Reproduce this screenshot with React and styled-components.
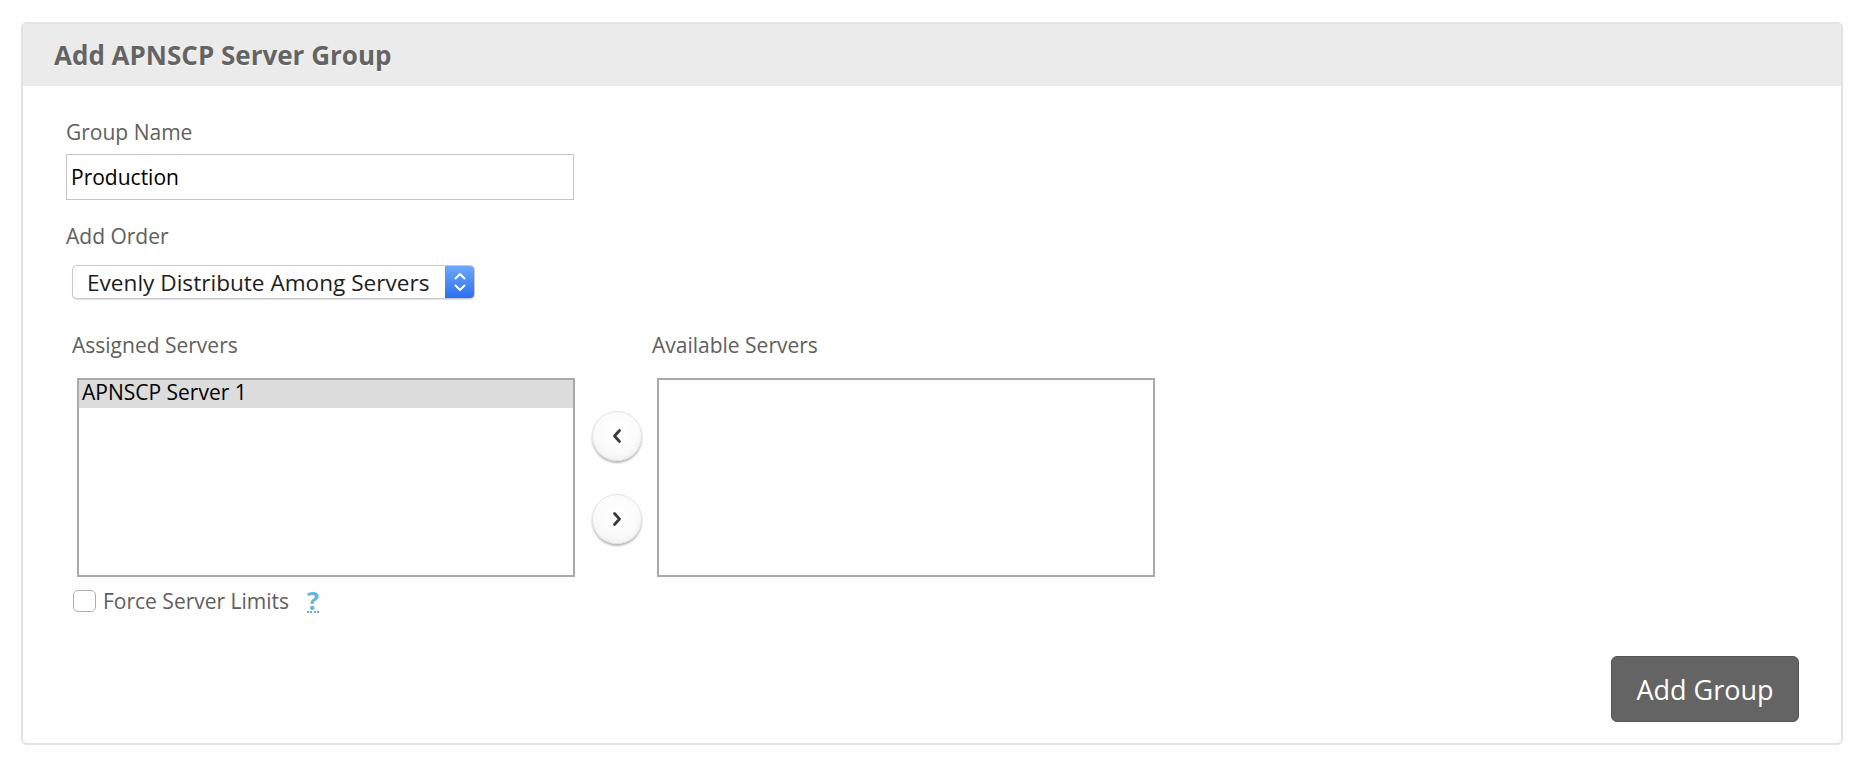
import React from 'react';
import styled, { createGlobalStyle } from 'styled-components';

const GlobalStyle = createGlobalStyle`
  html, body {
    margin: 0;
    padding: 0;
    background: #ffffff;
  }
  body {
    font-family: 'Open Sans', 'Noto Sans', sans-serif;
  }
`;

const ChevronLeft = () => (
  <svg width="12" height="16" viewBox="0 0 12 16">
    <polyline points="8.5,2.5 3.5,8 8.5,13.5" fill="none" stroke="#3a3a3a" strokeWidth="2.8" strokeLinecap="round" strokeLinejoin="round" />
  </svg>
);

const ChevronRight = () => (
  <svg width="12" height="16" viewBox="0 0 12 16">
    <polyline points="3.5,2.5 8.5,8 3.5,13.5" fill="none" stroke="#3a3a3a" strokeWidth="2.8" strokeLinecap="round" strokeLinejoin="round" />
  </svg>
);

const Stepper = () => (
  <svg width="14" height="22" viewBox="0 0 14 22">
    <polyline points="2.5,7.5 7,3 11.5,7.5" fill="none" stroke="#fff" strokeWidth="2" strokeLinecap="round" strokeLinejoin="round" />
    <polyline points="2.5,14.5 7,19 11.5,14.5" fill="none" stroke="#fff" strokeWidth="2" strokeLinecap="round" strokeLinejoin="round" />
  </svg>
);

const App = () => {
  const assigned = ['APNSCP Server 1'];
  const available = [];

  return (
    <>
      <GlobalStyle />
      <Panel>
        <PanelHeader>
          <PanelTitle>Add APNSCP Server Group</PanelTitle>
        </PanelHeader>

        <PanelBody>
          <FieldLabel>Group Name</FieldLabel>
          <TextInput type="text" defaultValue="Production" />

          <FieldLabel>Add Order</FieldLabel>
          <SelectBox>
            <SelectValue>Evenly Distribute Among Servers</SelectValue>
            <SelectCap>
              <Stepper />
            </SelectCap>
          </SelectBox>

          <ServerSection>
            <ServerGrid>
              <ColumnLabel>Assigned Servers</ColumnLabel>
              <span />
              <ColumnLabel>Available Servers</ColumnLabel>

              <ListBox>
                {assigned.map((name, i) => (
                  <ListOption key={name} selected={i === 0}>{name}</ListOption>
                ))}
              </ListBox>

              <MoveButtons>
                <RoundButton type="button" aria-label="Assign">
                  <ChevronLeft />
                </RoundButton>
                <RoundButton type="button" aria-label="Remove">
                  <ChevronRight />
                </RoundButton>
              </MoveButtons>

              <ListBox>
                {available.map((name) => (
                  <ListOption key={name}>{name}</ListOption>
                ))}
              </ListBox>
            </ServerGrid>

            <CheckRow>
              <CheckBox type="checkbox" />
              <CheckLabel>Force Server Limits</CheckLabel>
              <HelpMark title="Help">?</HelpMark>
            </CheckRow>
          </ServerSection>

          <FormFooter>
            <SubmitButton type="button">Add Group</SubmitButton>
          </FormFooter>
        </PanelBody>
      </Panel>
    </>
  );
};

const Panel = styled.div`
  margin: 22px 17px 0 21px;
  border: 2px solid #e3e3e3;
  border-radius: 6px;
  background: #fefefe;
  overflow: hidden;
`;

const PanelHeader = styled.div`
  height: 62px;
  display: flex;
  align-items: center;
  padding-left: 31px;
  background: #ebebeb;
`;

const PanelTitle = styled.h2`
  margin: 0;
  font-size: 26px;
  font-weight: 700;
  color: #646464;
  text-shadow: 0 1px 0 #ffffff;
  line-height: 1;
`;

const PanelBody = styled.div`
  padding: 32px 42px 21px 43px;
  display: flex;
  flex-direction: column;
  align-items: flex-start;
`;

const FieldLabel = styled.label`
  display: block;
  font-size: 21px;
  line-height: 28px;
  color: #606060;
  margin-bottom: 8px;
`;

const TextInput = styled.input`
  box-sizing: border-box;
  width: 508px;
  height: 46px;
  margin: 0 0 22px;
  padding: 0 4px;
  border: 1px solid #c6c6c6;
  background: #ffffff;
  font-family: 'Open Sans', sans-serif;
  font-size: 21px;
  color: #000000;
  outline: none;
`;

const SelectBox = styled.div`
  box-sizing: border-box;
  display: flex;
  align-items: stretch;
  width: 403px;
  height: 34px;
  margin: 7px 0 32px 6px;
  border: 1px solid #c9c9c9;
  border-radius: 5px;
  background: #ffffff;
  box-shadow: 0 1px 1px rgba(0, 0, 0, 0.12);
  overflow: hidden;
`;

const SelectValue = styled.div`
  flex: 1;
  display: flex;
  align-items: center;
  padding-left: 14px;
  font-size: 22.6px;
  color: #1e1e1e;
  white-space: nowrap;
`;

const SelectCap = styled.div`
  width: 29px;
  display: flex;
  align-items: center;
  justify-content: center;
  background: linear-gradient(#6ca8f9, #2d6ef1);
`;

const ServerSection = styled.div`
  margin-left: 11px;
`;

const ServerGrid = styled.div`
  display: grid;
  grid-template-columns: 498px 82px 498px;
  grid-template-rows: 28px 199px;
  row-gap: 19px;
`;

const ColumnLabel = styled.div`
  margin-left: -5px;
  font-size: 21px;
  line-height: 28px;
  color: #606060;
`;

const ListBox = styled.div`
  box-sizing: border-box;
  border: 2px solid #a9a9a9;
  background: #ffffff;
  overflow: hidden;
`;

const ListOption = styled.div`
  height: 28px;
  padding: 0 3px;
  font-size: 21px;
  line-height: 25px;
  color: #000000;
  background: ${(p) => (p.selected ? '#dcdcdc' : 'transparent')};
`;

const MoveButtons = styled.div`
  display: flex;
  flex-direction: column;
  align-items: center;
  justify-content: center;
  gap: 33px;
  padding-left: 2px;
`;

const RoundButton = styled.button`
  width: 50px;
  height: 50px;
  padding: 0;
  display: flex;
  align-items: center;
  justify-content: center;
  border: 1px solid #e2e2e2;
  border-radius: 50%;
  background: radial-gradient(circle at 50% 40%, #ffffff 0%, #fbfbfb 55%, #e9e9e9 100%);
  box-shadow: 0 2px 2px rgba(0, 0, 0, 0.28);
  cursor: pointer;
`;

const CheckRow = styled.div`
  display: flex;
  align-items: center;
  height: 28px;
  margin: 10px 0 0 -4px;
`;

const CheckBox = styled.input`
  appearance: none;
  box-sizing: border-box;
  width: 23px;
  height: 22px;
  margin: 0 7px 0 0;
  border: 1px solid #adadad;
  border-radius: 5px;
  background: #ffffff;
`;

const CheckLabel = styled.span`
  font-size: 21px;
  line-height: 28px;
  color: #606060;
`;

const HelpMark = styled.abbr`
  margin-left: 18px;
  font-size: 25px;
  font-weight: 700;
  line-height: 22px;
  color: #62b3df;
  text-decoration: none;
  border-bottom: 2px dotted #62b3df;
  cursor: help;
`;

const FormFooter = styled.div`
  align-self: stretch;
  display: flex;
  justify-content: flex-end;
  margin-top: 41px;
`;

const SubmitButton = styled.button`
  width: 188px;
  height: 66px;
  border: 1px solid #555555;
  border-radius: 6px;
  background: #646464;
  color: #ffffff;
  font-family: 'Open Sans', sans-serif;
  font-size: 27px;
  cursor: pointer;
`;

export default App;
